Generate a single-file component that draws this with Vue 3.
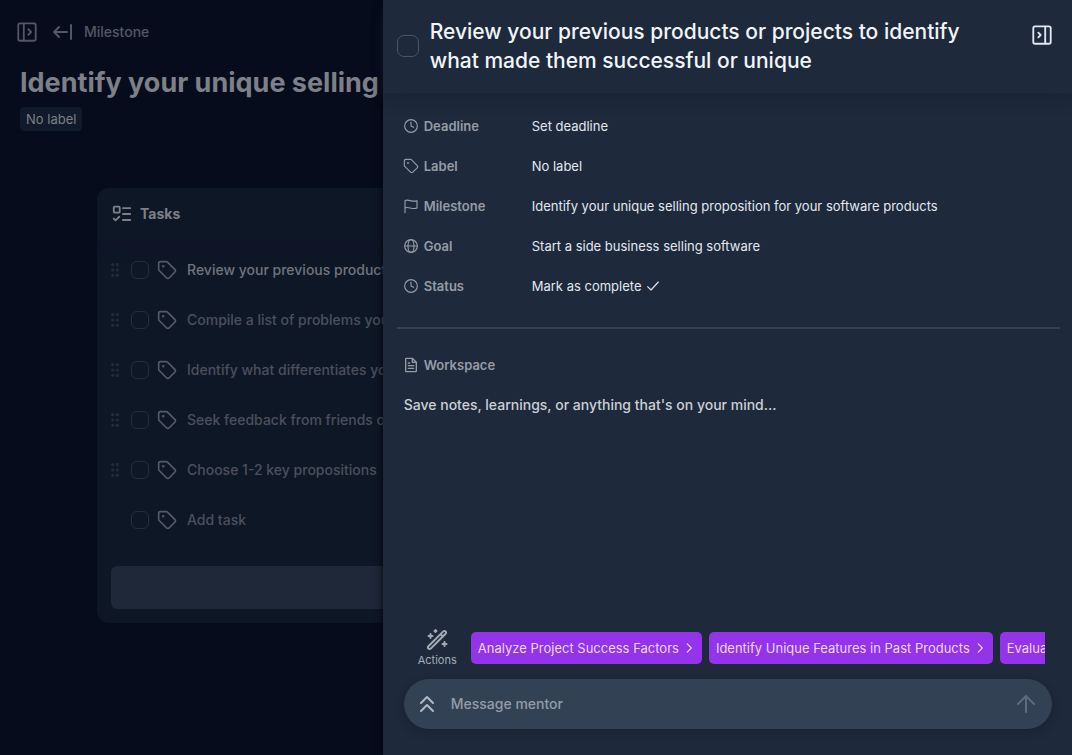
<script setup>
import { ref } from 'vue'

const tasks = ref([
  { id: 1, text: 'Review your previous products', active: true, done: false },
  { id: 2, text: 'Compile a list of problems your', done: false },
  { id: 3, text: 'Identify what differentiates your', done: false },
  { id: 4, text: 'Seek feedback from friends or', done: false },
  { id: 5, text: 'Choose 1-2 key propositions', done: false },
])
const newDone = ref(false)
const current = ref(false)
const notes = ref('')
const message = ref('')

const fields = [
  { name: 'Deadline', icon: 'clock', value: 'Set deadline' },
  { name: 'Label', icon: 'tag', value: 'No label' },
  { name: 'Milestone', icon: 'flag', value: 'Identify your unique selling proposition for your software products' },
  { name: 'Goal', icon: 'globe', value: 'Start a side business selling software' },
  { name: 'Status', icon: 'clock', value: 'Mark as complete', check: true },
]
const actions = [
  'Analyze Project Success Factors',
  'Identify Unique Features in Past Products',
  'Evaluate',
]
</script>

<template>
  <div class="app">
    <main class="page">
      <nav class="crumbs">
        <button class="plain" type="button" aria-label="Open sidebar">
          <svg class="ic i22" viewBox="0 0 24 24"><rect x="2.500" y="2.500" width="19" height="19" rx="2" /><path d="M8.500 3v18M13.500 9l3 3-3 3" /></svg>
        </button>
        <a class="back" href="#">
          <svg class="ic i24" viewBox="0 0 24 24"><path d="M4 12h13M9 7l-5 5 5 5M21 5v14" /></svg>
          <span>Milestone</span>
        </a>
      </nav>
      <h1>Identify your unique selling</h1>
      <button class="badge" type="button">No label</button>

      <section class="card">
        <header class="card-head">
          <svg class="ic i22" viewBox="0 0 24 24"><rect x="3" y="4" width="6.500" height="6.500" rx="1" /><path d="M3 17l2 2 4-4M13 5.500h8M13 12h8M13 18.500h8" /></svg>
          <h2>Tasks</h2>
        </header>
        <ul class="tasks">
          <li v-for="t in tasks" :key="t.id" :class="{ active: t.active }">
            <svg class="grip" viewBox="0 0 8 14"><circle v-for="n in 6" :key="n" :cx="n % 2 ? 1.700 : 6.300" :cy="1.700 + Math.floor((n - 1) / 2) * 5.300" r="1.600" /></svg>
            <input :id="'task-' + t.id" v-model="t.done" class="box small" type="checkbox" />
            <svg class="ic i20" viewBox="0 0 24 24"><path d="M12.586 2.586A2 2 0 0 0 11.172 2H4a2 2 0 0 0-2 2v7.172a2 2 0 0 0 .586 1.414l8.704 8.704a2.426 2.426 0 0 0 3.420 0l6.580-6.580a2.426 2.426 0 0 0 0-3.420z" /><circle cx="7.500" cy="7.500" r=".6" /></svg>
            <label :for="'task-' + t.id">{{ t.text }}</label>
          </li>
          <li>
            <span class="grip"></span>
            <input id="task-new" v-model="newDone" class="box small" type="checkbox" />
            <svg class="ic i20" viewBox="0 0 24 24"><path d="M12.586 2.586A2 2 0 0 0 11.172 2H4a2 2 0 0 0-2 2v7.172a2 2 0 0 0 .586 1.414l8.704 8.704a2.426 2.426 0 0 0 3.420 0l6.580-6.580a2.426 2.426 0 0 0 0-3.420z" /><circle cx="7.500" cy="7.500" r=".6" /></svg>
            <label for="task-new">Add task</label>
          </li>
        </ul>
        <button class="wide" type="button" aria-label="Add"></button>
      </section>
    </main>

    <aside class="drawer">
      <header class="drawer-head">
        <input id="current" v-model="current" class="box large" type="checkbox" />
        <h2><label for="current">Review your previous products or projects to identify what made them successful or unique</label></h2>
        <button class="plain close" type="button" aria-label="Close panel">
          <svg class="ic i22" viewBox="0 0 24 24"><rect x="2.500" y="2.500" width="19" height="19" rx="2" /><path d="M15.500 3v18M8 9.500l2.500 2.500-2.500 2.500" /></svg>
        </button>
      </header>

      <dl class="fields">
        <div v-for="f in fields" :key="f.name" class="field">
          <dt>
            <svg v-if="f.icon === 'clock'" class="ic i16 thin" viewBox="0 0 24 24"><circle cx="12" cy="12" r="9.500" /><path d="M12 6v6l4 2" /></svg>
            <svg v-else-if="f.icon === 'tag'" class="ic i16 thin" viewBox="0 0 24 24"><path d="M12.586 2.586A2 2 0 0 0 11.172 2H4a2 2 0 0 0-2 2v7.172a2 2 0 0 0 .586 1.414l8.704 8.704a2.426 2.426 0 0 0 3.420 0l6.580-6.580a2.426 2.426 0 0 0 0-3.420z" /><circle cx="7.500" cy="7.500" r=".6" /></svg>
            <svg v-else-if="f.icon === 'flag'" class="ic i16 thin" viewBox="0 0 24 24"><path d="M3 22V4c5-3 11 3 18 0v11c-7 3-13-3-18 0" /></svg>
            <svg v-else class="ic i16 thin" viewBox="0 0 24 24"><circle cx="12" cy="12" r="9.500" /><ellipse cx="12" cy="12" rx="4.500" ry="9.500" /><path d="M2.500 12h19" /></svg>
            {{ f.name }}
          </dt>
          <dd>
            <button class="plain" type="button">
              {{ f.value }}
              <svg v-if="f.check" class="ic i16 thin" viewBox="0 0 24 24"><path d="M4 13l5 5L20 6" /></svg>
            </button>
          </dd>
        </div>
      </dl>

      <section class="workspace">
        <label for="notes">
          <svg class="ic i16" viewBox="0 0 24 24"><path d="M14 2H5a1 1 0 0 0-1 1v18a1 1 0 0 0 1 1h14a1 1 0 0 0 1-1V8zM14 2v6h6M8 9h2M8 13h8M8 17h8" /></svg>
          Workspace
        </label>
        <textarea id="notes" v-model="notes" placeholder="Save notes, learnings, or anything that's on your mind..."></textarea>
      </section>

      <footer class="mentor">
        <div class="actions">
          <div class="actions-label">
            <svg class="ic i24" viewBox="0 0 24 24"><path d="M20.600 3.400a1.600 1.600 0 0 0-2.300 0L3.400 18.300a1.600 1.600 0 0 0 0 2.300a1.600 1.600 0 0 0 2.300 0L20.600 5.700a1.600 1.600 0 0 0 0-2.300zM15.500 6.200l2.300 2.300M5.500 6v4M3.500 8h4M10.500 2v2M9.500 3h2M19.500 14v4M17.500 16h4" /></svg>
            <span>Actions</span>
          </div>
          <div class="chips">
            <button v-for="a in actions" :key="a" class="chip" type="button">
              {{ a }}
              <svg class="ic i14" viewBox="0 0 24 24"><path d="M9 5l7 7-7 7" /></svg>
            </button>
          </div>
        </div>
        <form class="message" @submit.prevent>
          <button class="plain" type="button" aria-label="Expand chat">
            <svg class="ic i24" viewBox="0 0 24 24"><path d="M6 11l6-6 6 6M6 19l6-6 6 6" /></svg>
          </button>
          <input v-model="message" type="text" aria-label="Message mentor" placeholder="Message mentor" />
          <button class="plain send" type="submit" aria-label="Send">
            <svg class="ic i24" viewBox="0 0 24 24"><path d="M12 20V4M4 12l8-8 8 8" /></svg>
          </button>
        </form>
      </footer>
    </aside>
  </div>
</template>

<style>
body {
  margin: 0;
  background: #070c1d;
}
</style>

<style scoped>
.app {
  position: relative;
  min-height: 100vh;
  overflow: hidden;
  font: 500 14px/24px Inter, "Liberation Sans", sans-serif;
  color: #7d8088;
}
*, *::before, *::after { box-sizing: border-box; }
button, input, textarea { font: inherit; color: inherit; }
h1, h2, dl, dd, ul { margin: 0; padding: 0; }
.plain {
  display: flex;
  align-items: center;
  padding: 0;
  border: 0;
  background: none;
}
.ic {
  display: block;
  flex: none;
  fill: none;
  stroke: currentColor;
  stroke-width: 2;
  stroke-linecap: round;
  stroke-linejoin: round;
}
.thin { stroke-width: 1.700; }
.i14 { width: 14px; height: 14px; }
.i16 { width: 16px; height: 16px; }
.i20 { width: 20px; height: 20px; }
.i22 { width: 22px; height: 22px; }
.i24 { width: 24px; height: 24px; }

.box {
  appearance: none;
  flex: none;
  margin: 0;
  border: 1px solid #252e3e;
}
.box.small { width: 18px; height: 18px; border-radius: 6px; }
.box.large { width: 22px; height: 22px; border-radius: 7px; border-color: #475569; }
.box:checked { background: #9333ea; }

/* page behind the drawer */
.page { padding: 20px; }
.crumbs {
  display: flex;
  align-items: center;
  gap: 12px;
  margin-left: -4px;
  color: #535763;
}
.back {
  display: flex;
  align-items: center;
  gap: 10px;
  color: inherit;
  text-decoration: none;
}
h1 {
  margin-top: 21px;
  overflow: hidden;
  white-space: nowrap;
  font-size: 27px;
  line-height: 36px;
  font-weight: 700;
}
.badge {
  display: block;
  margin-top: 6px;
  padding: 0 6px;
  border: 0;
  border-radius: 4px;
  background: #101a2a;
  font-size: 13px;
  font-weight: 400;
  line-height: 24px;
}
.card {
  margin: 57px 77px 0;
  border-radius: 12px;
  background: #0e1726;
  overflow: hidden;
}
.card-head {
  display: flex;
  align-items: center;
  gap: 7px;
  height: 52px;
  padding: 0 14px;
  box-shadow: 0 10px 15px -3px #14142a80;
}
.card-head h2 { font-size: 14px; font-weight: 700; }
.tasks {
  list-style: none;
  padding: 5px 14px 0;
  color: #4b505c;
}
.tasks li {
  display: flex;
  align-items: center;
  height: 50px;
  white-space: nowrap;
}
.tasks .active label { color: #70747d; }
.tasks .ic { margin: 0 10px 0 8px; color: #565a65; }
.grip {
  flex: none;
  width: 8px;
  height: 14px;
  margin-right: 12px;
  fill: #232c3b;
}
.wide {
  display: block;
  width: calc(100% - 28px);
  height: 43px;
  margin: 21px 14px 14px;
  border: 0;
  border-radius: 6px;
  background: #1e2839;
}

/* task drawer */
.drawer {
  position: absolute;
  inset: 0 0 0 auto;
  display: flex;
  flex-direction: column;
  width: 64.300%;
  background: #1e293b;
  box-shadow: 0 0 8px #000c;
  color: #e2e8f0;
}
.drawer-head {
  display: flex;
  align-items: center;
  gap: 11px;
  padding: 17px 19px 18px 14px;
  box-shadow: 0 10px 15px -3px #1a24324d, 0 4px 8px #1a243280;
}
.drawer-head h2 {
  flex: 1;
  padding-right: 40px;
  font-size: 21px;
  line-height: 29px;
  font-weight: 500;
  color: #f1f5f9;
}
.close { align-self: flex-start; margin-top: 7px; }
.fields {
  margin: 0 12px 0 14px;
  padding: 13px 6px 21px;
  border-bottom: 2px solid #334155;
  font-size: 13px;
  font-weight: 400;
}
.field {
  display: flex;
  align-items: center;
  height: 40px;
}
dt, .workspace label {
  display: flex;
  align-items: center;
  gap: 5px;
  font-weight: 600;
  color: #969ca6;
}
dt { width: 129px; }
dd .plain { gap: 4px; }
.workspace {
  flex: 1;
  display: flex;
  flex-direction: column;
  padding: 24px 20px 0;
}
.workspace label { font-size: 13px; }
.workspace textarea {
  flex: 1;
  margin: 16px 0 0;
  padding: 0 1px;
  border: 0;
  outline: 0;
  resize: none;
  background: none;
}
.workspace textarea::placeholder { color: #cbd0d6; }
.mentor { padding: 0 20px 26px 21px; }
.actions {
  display: flex;
  align-items: center;
  gap: 14px;
  margin: 0 7px 11px 14px;
}
.actions-label {
  display: flex;
  flex-direction: column;
  align-items: center;
  color: #a5abb5;
  font-size: 11px;
  font-weight: 400;
  line-height: 16px;
}
.chips {
  flex: 1;
  min-width: 0;
  display: flex;
  gap: 7px;
  overflow: hidden;
}
.chip {
  flex: none;
  display: flex;
  align-items: center;
  gap: 3px;
  height: 32px;
  padding: 0 6px 0 7px;
  border: 0;
  border-radius: 5px;
  background: #9333ea;
  color: #ead9fb;
  font-size: 13px;
  font-weight: 400;
}
.message {
  display: flex;
  align-items: center;
  gap: 12px;
  height: 50px;
  padding: 0 14px 0 11px;
  border-radius: 25px;
  background: #334155;
  box-shadow: 0 4px 10px #1318264d;
  color: #b0b8c3;
}
.message input {
  flex: 1;
  min-width: 0;
  padding: 0;
  border: 0;
  outline: 0;
  background: none;
}
.message input::placeholder { color: #949ca8; opacity: 1; }
.send { color: #5f6b7c; }
</style>
